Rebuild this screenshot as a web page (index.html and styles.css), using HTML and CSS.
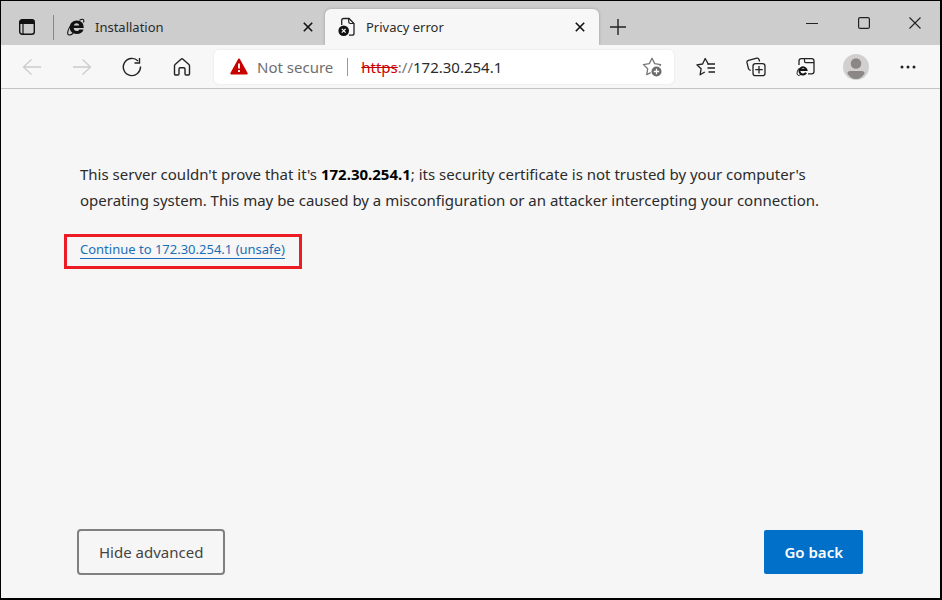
FILE: index.html
```html
<!DOCTYPE html>
<html lang="en">
<head>
  <meta charset="UTF-8">
  <title>Privacy error</title>
  <link rel="stylesheet" href="styles.css">
</head>
<body>
  <div class="window">
    <header class="tab-strip">
      <button class="tab-menu" aria-label="Tab actions">
        <svg width="18" height="18" viewBox="0 0 18 18"><rect x="1.7" y="1.7" width="14.6" height="14.6" rx="2.5" fill="none" stroke="#111" stroke-width="1.4"/><path d="M1.5 6V4q0-2.5 2.5-2.5h10q2.5 0 2.5 2.5v2z" fill="#111"/><path d="M5 6v10" stroke="#111" stroke-width="1.2"/></svg>
      </button>
      <div class="tab">
        <svg width="18" height="18" viewBox="0 0 18 18"><path fill="#111" fill-rule="evenodd" d="M16.500 11.500h-4.300c-.4 1-1.300 1.500-2.500 1.500-1.800 0-2.900-1-3-2.900h10c.3-4.900-2.500-7.700-6.800-7.700-4.300 0-7.200 2.900-7.200 6.900s2.900 6.700 7.100 6.700c3.500 0 5.900-1.700 6.700-4.500zM6.800 7.600c.2-1.500 1.300-2.400 2.800-2.400s2.600.9 2.700 2.400z"/><path d="M12.500 2.200C15.500.5 17.700 1 16.500 4.500M3.800 7.500C.8 11.500-.2 15.800 1.500 16.800c1.200.7 3-.2 4.700-1.500" fill="none" stroke="#111" stroke-width="1.100"/></svg>
        <span class="tab-title">Installation</span>
        <button class="tab-close" aria-label="Close tab">
          <svg width="10" height="10" viewBox="0 0 10 10"><path d="M.8.8l8.400 8.400M9.200.8L.8 9.200" stroke="#111" stroke-width="1.600"/></svg>
        </button>
      </div>
      <div class="tab active">
        <svg width="18" height="20" viewBox="0 0 18 20"><path d="M3.700 8V3.500q0-2 2-2h5.300l5 5v9.700q0 2-2 2h-3" fill="none" stroke="#222" stroke-width="1.300"/><path d="M10.700 1.500v3.300q0 1.700 1.700 1.700H16" fill="none" stroke="#222" stroke-width="1.200"/><circle cx="5.700" cy="13.700" r="5.300" fill="#111"/><path d="M3.800 11.800l3.800 3.800M7.600 11.800l-3.800 3.800" stroke="#fff" stroke-width="1.200"/></svg>
        <span class="tab-title">Privacy error</span>
        <button class="tab-close" aria-label="Close tab">
          <svg width="10" height="10" viewBox="0 0 10 10"><path d="M.8.8l8.400 8.400M9.200.8L.8 9.200" stroke="#111" stroke-width="1.600"/></svg>
        </button>
      </div>
      <button class="new-tab" aria-label="New tab">
        <svg width="16" height="16" viewBox="0 0 16 16"><path d="M8 0v16M0 8h16" stroke="#222" stroke-width="1.400"/></svg>
      </button>
      <div class="window-controls">
        <button aria-label="Minimize"><svg width="12" height="12" viewBox="0 0 12 12"><path d="M0 6.500h12" stroke="#222"/></svg></button>
        <button aria-label="Maximize"><svg width="12" height="12" viewBox="0 0 12 12"><rect x=".6" y=".6" width="10.800" height="10.800" rx="1.500" fill="none" stroke="#222" stroke-width="1.200"/></svg></button>
        <button aria-label="Close"><svg width="12" height="12" viewBox="0 0 12 12"><path d="M.5.5l11 11M11.500.5l-11 11" stroke="#222" stroke-width="1.100"/></svg></button>
      </div>
    </header>

    <nav class="toolbar">
      <div class="nav-buttons">
        <button aria-label="Back" disabled><svg width="20" height="20" viewBox="0 0 20 20"><path d="M19 10H1.500M9.500 2.500L1.500 10l8 7.500" fill="none" stroke="#ccc" stroke-width="1.300"/></svg></button>
        <button aria-label="Forward" disabled><svg width="20" height="20" viewBox="0 0 20 20"><path d="M1 10h17.500M10.500 2.500l8 7.500-8 7.500" fill="none" stroke="#ccc" stroke-width="1.300"/></svg></button>
        <button aria-label="Refresh"><svg width="20" height="20" viewBox="0 0 20 20"><path d="M18.500 9.500A8.600 8.600 0 1 1 16 3.900" fill="none" stroke="#222" stroke-width="1.400"/><path d="M17.500 1v5h-5" fill="none" stroke="#222" stroke-width="1.400"/></svg></button>
        <button aria-label="Home"><svg width="18" height="20" viewBox="0 0 18 20"><path d="M1.500 8.800q0-.8.6-1.300L8 2.200q1-.8 2 0l5.900 5.300q.6.5.6 1.300v8q0 1.200-1.200 1.200h-2.100q-1.200 0-1.200-1.200V12q0-1.200-1.200-1.200H7.200Q6 10.800 6 12v4.800Q6 18 4.800 18H2.700q-1.200 0-1.200-1.200z" fill="none" stroke="#222" stroke-width="1.400"/></svg></button>
      </div>
      <div class="address-bar">
        <svg width="18" height="17" viewBox="0 0 18 17"><path d="M9 1.500L16.700 15.500H1.300z" fill="#c80000" stroke="#c80000" stroke-width="2" stroke-linejoin="round"/><path d="M9 5.500v5M9 12v2" stroke="#fff" stroke-width="1.800"/></svg>
        <span class="security">Not secure</span>
        <span class="url"><s>https</s><span class="slashes">://</span>172.30.254.1</span>
        <button class="add-favorite" aria-label="Add to favorites">
          <svg width="20" height="20" viewBox="0 0 20 20"><path d="M17.600 9l1-1.400-5.900-1L10 1.200 7.300 6.600l-5.900 1 4.300 4.200-1 5.900 4-2" fill="none" stroke="#777" stroke-width="1.300" stroke-linejoin="round"/><circle cx="14.500" cy="14.500" r="5" fill="#6b6b6b"/><path d="M14.500 11.800v5.400M11.800 14.500h5.400" stroke="#fff" stroke-width="1.300"/></svg>
        </button>
      </div>
      <div class="tools">
        <button aria-label="Favorites"><svg width="20" height="20" viewBox="0 0 20 20"><path d="M12.500 7.500L9.200 1.500 6.600 7l-5.700.8 4.200 4-1 6L8.800 15" fill="none" stroke="#222" stroke-width="1.300" stroke-linejoin="round"/><path d="M11.500 7H19M11.500 11H19M12.500 15H19" stroke="#222" stroke-width="1.300"/></svg></button>
        <button aria-label="Collections"><svg width="20" height="20" viewBox="0 0 20 20"><path d="M4.600 13.500l-1.200-.7q-.8-.5-1-1.400L1 5.700Q.6 3.800 2.500 3.300l8.300-2.100q1.700-.4 2.200 1.300l.6 2" fill="none" stroke="#222" stroke-width="1.300"/><rect x="7" y="6.700" width="12" height="12" rx="2.500" fill="#f7f7f7" stroke="#222" stroke-width="1.300"/><path d="M13 9v7.400M9.300 12.700h7.400" stroke="#222" stroke-width="1.300"/></svg></button>
        <button aria-label="Internet Explorer mode"><svg width="20" height="20" viewBox="0 0 20 20"><path d="M3 8V4q0-2.300 2.300-2.300h10.400Q18 1.700 18 4v10.500q0 2.300-2.300 2.300H12" fill="none" stroke="#222" stroke-width="1.300"/><path d="M8.500 1.700v2.600q0 1.300 1.300 1.300H18" fill="none" stroke="#222" stroke-width="1.200"/><path d="M10.100 15.800a3.600 3.600 0 1 1 .4-2.700H4.500" fill="none" stroke="#111" stroke-width="2"/><path d="M3.500 11C.8 13.500.5 17.500 2 18.300c.9.4 2-.2 3-1" fill="none" stroke="#111"/></svg></button>
        <button aria-label="Profile"><svg width="26" height="26" viewBox="0 0 26 26"><circle cx="13" cy="13" r="13" fill="#d2d0ce"/><circle cx="13" cy="9.500" r="5.300" fill="#8a8785"/><path d="M4.200 19q.8-2 3-2h11.600q2.200 0 3 2-3.200 6-8.800 6t-8.800-6z" fill="#8a8785"/></svg></button>
        <button aria-label="Settings and more"><svg width="16" height="20" viewBox="0 0 16 20"><circle cx="2" cy="10" r="1.500" fill="#222"/><circle cx="8" cy="10" r="1.500" fill="#222"/><circle cx="14" cy="10" r="1.500" fill="#222"/></svg></button>
      </div>
    </nav>

    <main class="page">
      <p class="message">This server couldn't prove that it's <strong>172.30.254.1</strong>; its security certificate is not trusted by your computer's operating system. This may be caused by a misconfiguration or an attacker intercepting your connection.</p>
      <div class="highlight">
        <a href="#">Continue to 172.30.254.1 (unsafe)</a>
      </div>
      <div class="actions">
        <button class="btn">Hide advanced</button>
        <button class="btn primary">Go back</button>
      </div>
    </main>
  </div>
</body>
</html>
```
FILE: styles.css
```css
* {
  box-sizing: border-box;
}

body {
  margin: 0;
  font-family: "Noto Sans", "Open Sans", sans-serif;
  color: #2b2b2b;
}

button {
  font-family: inherit;
  border: 0;
  padding: 0;
  background: none;
}

svg {
  display: block;
  flex: none;
}

.window {
  display: flex;
  flex-direction: column;
  min-height: 100vh;
  border: solid #000;
  border-width: 1px 2px 2px 1px;
  background: #f6f6f6;
}

/* tabs */
.tab-strip {
  display: flex;
  height: 44px;
  background: #cdcdcd;
}

.tab-menu {
  padding: 8px 17px 0;
}

.tab {
  display: flex;
  align-items: center;
  width: 272px;
  height: 36px;
  margin-top: 8px;
  padding: 0 12px 0 13px;
  font-size: 13px;
}

.tab:not(.active) {
  border-left: 1px solid;
  border-image: linear-gradient(transparent 7px, #888 7px, #888 30px, transparent 30px) 1;
}

.tab.active {
  width: 274px;
  padding-right: 14px;
  background: #f7f7f7;
  border-radius: 6px 6px 0 0;
  box-shadow: 0 0 3px #999;
  clip-path: inset(-3px -3px 0 -3px);
}

.tab-title {
  flex: 1;
  margin-left: 10px;
}

.new-tab {
  padding: 8px 11px 0;
}

.window-controls {
  display: flex;
  margin-left: auto;
}

.window-controls button {
  width: 52px;
  display: flex;
  align-items: center;
  justify-content: center;
}

.window-controls button:last-child {
  width: 50px;
}

/* toolbar */
.toolbar {
  display: flex;
  align-items: center;
  height: 44px;
  border-bottom: 1px solid #c4c4c4;
  background: #f7f7f7;
}

.nav-buttons,
.tools {
  display: flex;
}

.nav-buttons {
  padding-left: 6px;
}

.nav-buttons button,
.tools button {
  display: flex;
  align-items: center;
  justify-content: center;
  width: 50px;
  height: 34px;
}

.address-bar {
  display: flex;
  align-items: center;
  flex: 1;
  height: 34px;
  margin: 0 7px;
  padding: 0 12px 0 16px;
  background: #fff;
  border-radius: 5px;
  box-shadow: 0 0 2px #ddd;
  font-size: 15px;
}

.security {
  margin-left: 9px;
  padding-right: 14px;
  border-right: 1px solid #999;
  line-height: 18px;
  color: #6e6e6e;
}

.url {
  flex: 1;
  margin-left: 13px;
}

.url s {
  color: #c80000;
}

.slashes {
  color: #767676;
}

.tools button:last-child {
  width: 54px;
}

.tools {
  padding-right: 5px;
}

/* page content */
.page {
  flex: 1;
  display: flex;
  flex-direction: column;
  align-items: flex-start;
  padding: 72px 77px 23px 63px;
}

.message {
  margin: 0 0 21px 16px;
  font-size: 15px;
  line-height: 26px;
}

.message strong {
  color: #000;
}

.highlight {
  padding: 4px 14px 7px 13px;
  border: 3px solid #ed1c24;
  font-size: 13px;
  line-height: 17px;
}

.highlight a {
  display: block;
  color: #1a6fb8;
  text-decoration: none;
  border-bottom: 1px solid #1a6fb8;
}

.actions {
  display: flex;
  justify-content: space-between;
  align-items: center;
  align-self: stretch;
  margin-top: auto;
  padding-left: 13px;
}

.btn {
  height: 46px;
  padding: 0 20px;
  border: 2px solid #808080;
  border-radius: 4px;
  font-size: 15px;
  color: #444;
}

.btn.primary {
  height: 44px;
  border: 0;
  border-radius: 2px;
  background: #0070c9;
  color: #fff;
  font-weight: 600;
}
```
